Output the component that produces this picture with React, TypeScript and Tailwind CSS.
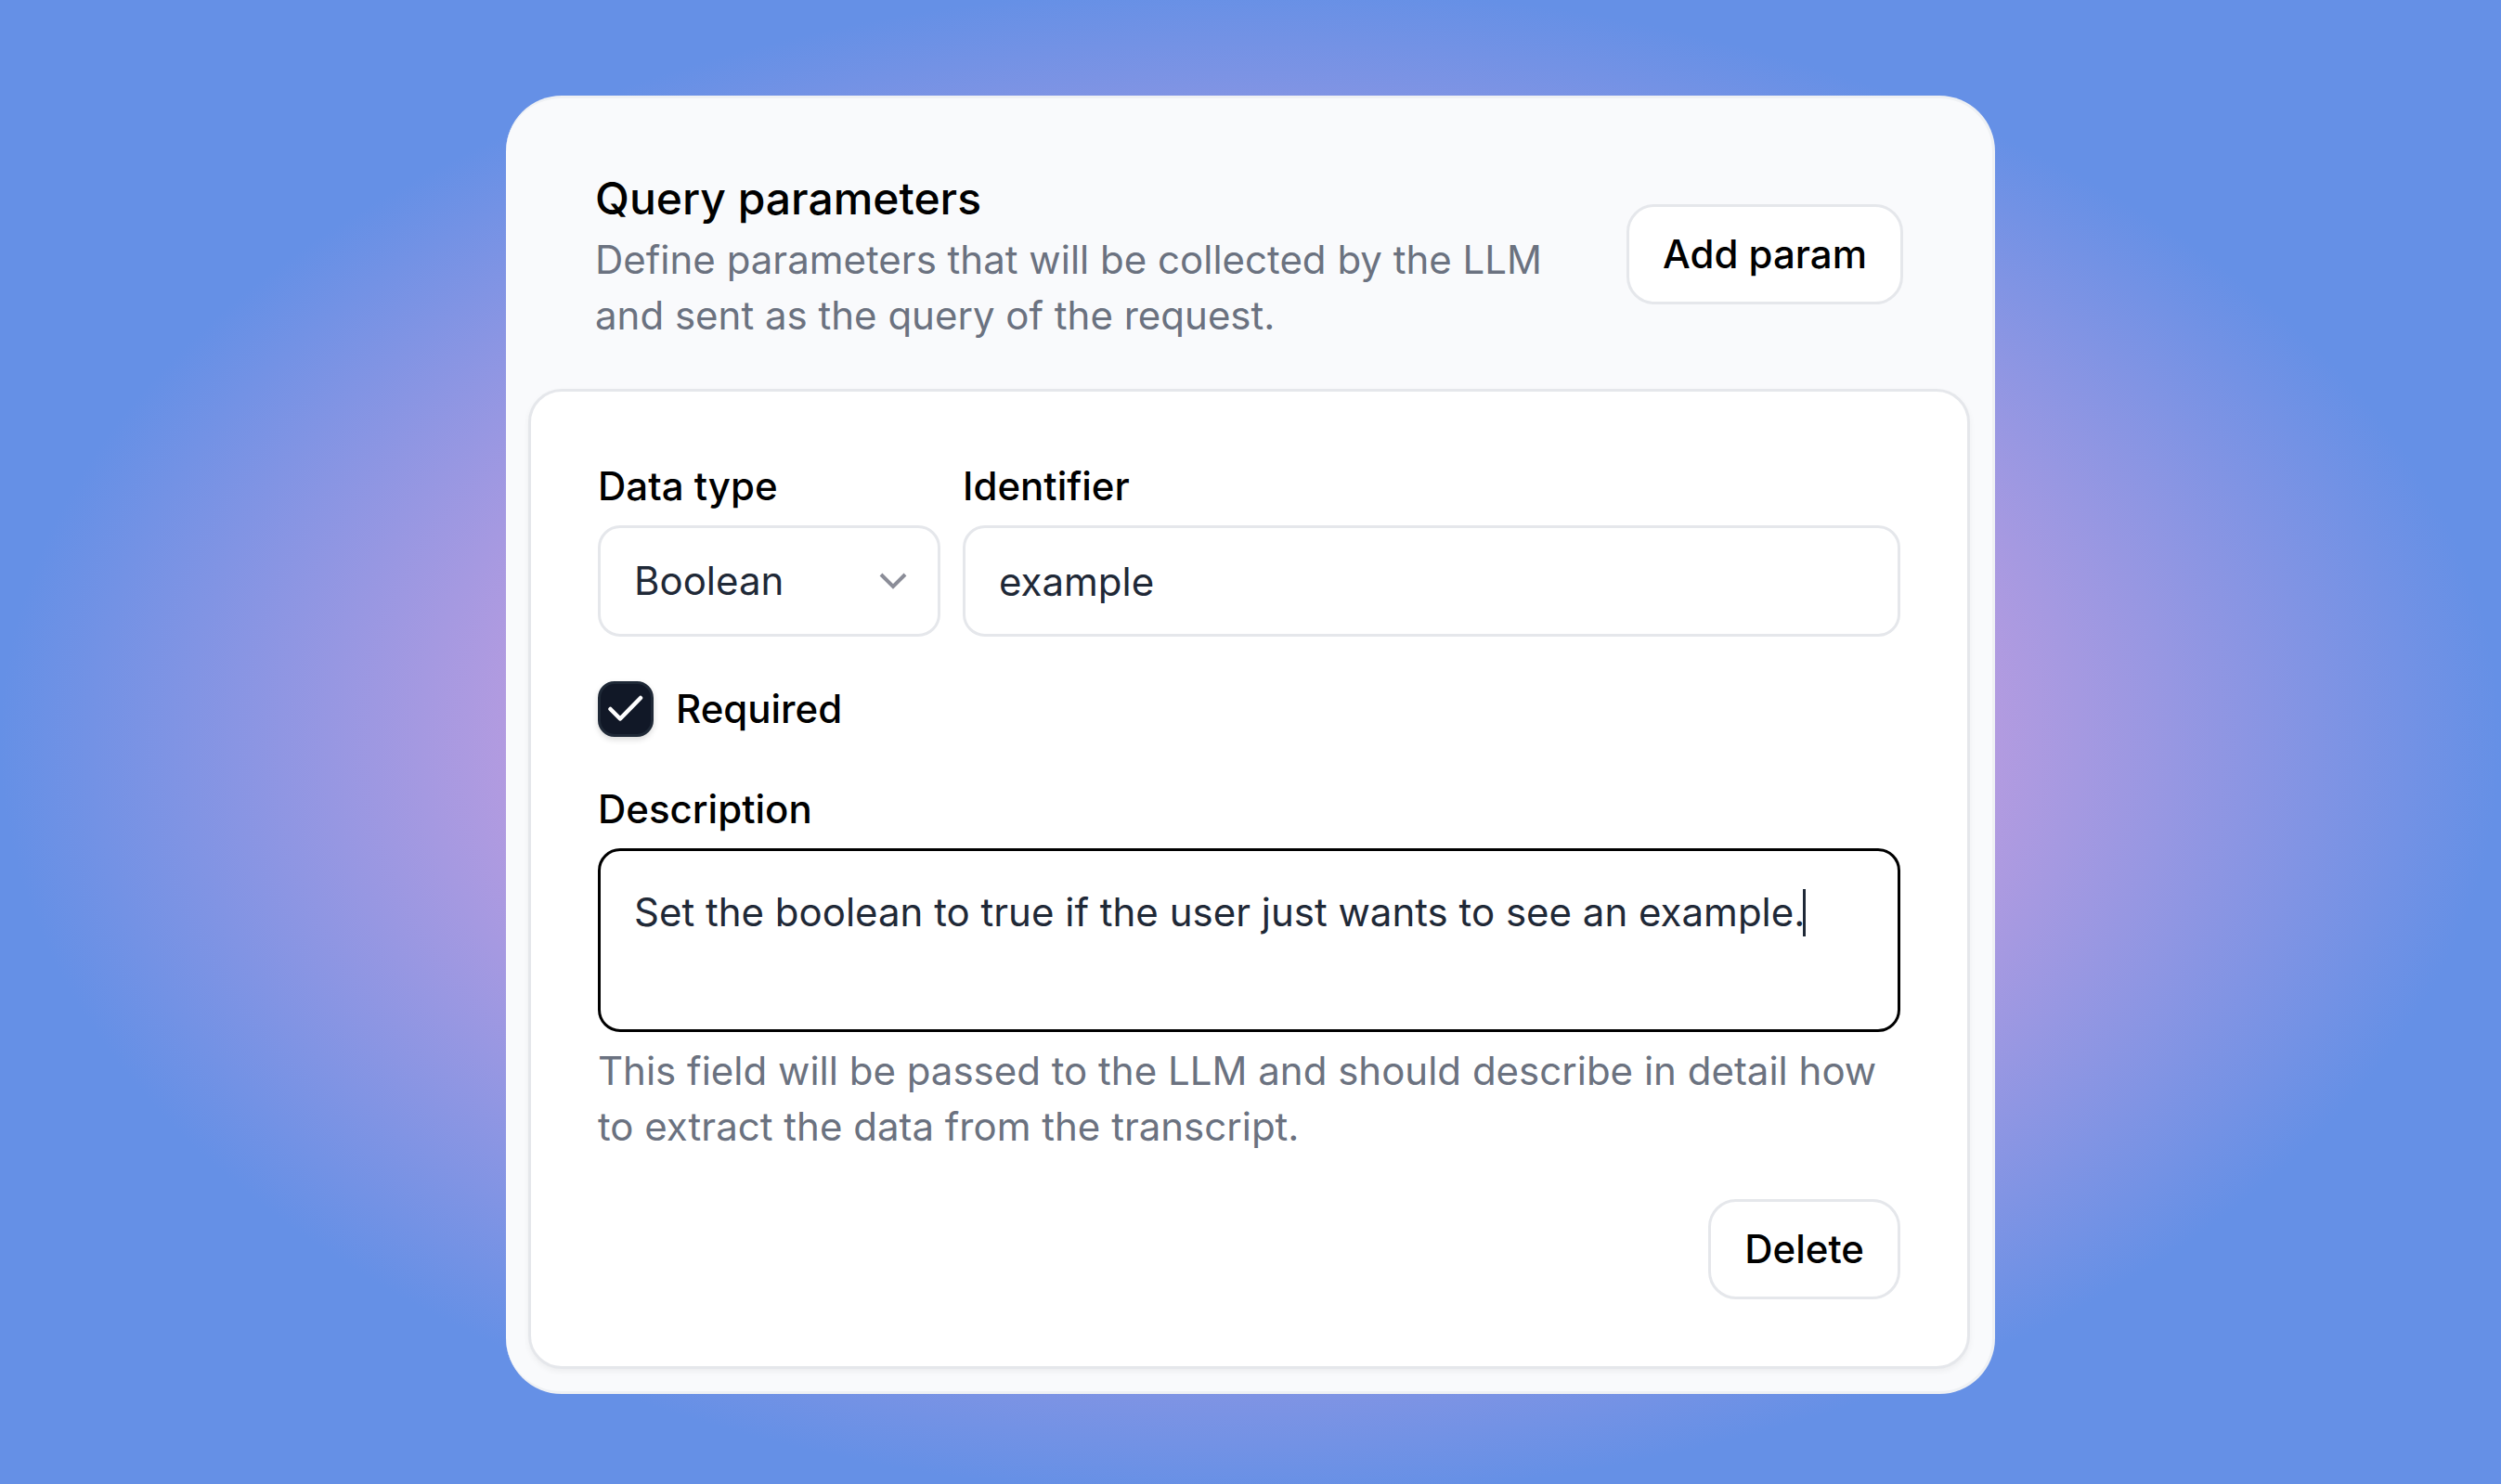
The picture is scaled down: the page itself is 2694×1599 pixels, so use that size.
import { useState } from "react";

const buttonClass =
  "h-[108px] shrink-0 rounded-[30px] border-[3px] border-[#e5e7eb] bg-white px-9 text-[42px] leading-[60px] font-medium text-black";
const labelClass = "block text-[42px] leading-[60px] font-medium text-black";
const fieldClass =
  "block h-[120px] w-full appearance-none rounded-[24px] border-[3px] border-[#e5e7eb] bg-white px-9 text-[42px] leading-[60px] text-[#1f2937] outline-none";
const hintClass = "text-[42px] leading-[60px] text-[#6b7280]";

export default function App() {
  const [dataType, setDataType] = useState("boolean");
  const [identifier, setIdentifier] = useState("example");
  const [required, setRequired] = useState(true);
  const [description, setDescription] = useState(
    "Set the boolean to true if the user just wants to see an example.",
  );

  return (
    <main className="flex min-h-screen justify-center bg-[radial-gradient(ellipse_50%_51%_at_50%_50%,#b39be0_59%,#6590e6_100%)] px-6 pt-[103px] pb-24 font-['Inter',sans-serif]">
      <section className="w-full max-w-[1604px] self-start rounded-[60px] border-y-[3px] border-r-[3px] border-[#eff1f4] bg-[#f9fafc] px-6 pb-6">
        <header className="flex items-center justify-between gap-20 px-[72px] pt-[72px] pb-[49px]">
          <div>
            <h2 className="text-[48px] leading-[72px] font-medium text-black">Query parameters</h2>
            <p className={hintClass}>
              Define parameters that will be collected by the LLM and sent as the query of the request.
            </p>
          </div>
          <button type="button" className={buttonClass}>
            Add param
          </button>
        </header>

        <form
          className="flex flex-col gap-12 rounded-[36px] border-[3px] border-[#e5e7eb] bg-white px-[72px] py-[72px] shadow-[0_3px_6px_rgba(0,0,0,0.05)]"
          onSubmit={(e) => e.preventDefault()}
        >
          <div className="flex gap-6">
            <div className="flex w-[369px] shrink-0 flex-col gap-3">
              <label htmlFor="data-type" className={labelClass}>
                Data type
              </label>
              <div className="relative">
                <select
                  id="data-type"
                  value={dataType}
                  onChange={(e) => setDataType(e.target.value)}
                  className={fieldClass}
                >
                  <option value="boolean">Boolean</option>
                  <option value="string">String</option>
                  <option value="number">Number</option>
                </select>
                <svg
                  viewBox="0 0 30 20"
                  className="pointer-events-none absolute top-[50px] right-9 h-5 w-[30px]"
                  fill="none"
                  stroke="#8b8d98"
                  strokeWidth="4"
                  aria-hidden="true"
                >
                  <path d="M2 3 L15 16 L28 3" />
                </svg>
              </div>
            </div>
            <div className="flex grow flex-col gap-3">
              <label htmlFor="identifier" className={labelClass}>
                Identifier
              </label>
              <input
                id="identifier"
                type="text"
                value={identifier}
                onChange={(e) => setIdentifier(e.target.value)}
                className={fieldClass}
              />
            </div>
          </div>

          <div className="flex items-center gap-6">
            <div className="relative size-[60px]">
              <input
                id="required"
                type="checkbox"
                checked={required}
                onChange={(e) => setRequired(e.target.checked)}
                className="block size-full appearance-none rounded-[18px] border-[3px] border-[#1f2937] bg-white shadow-[0_3px_6px_rgba(0,0,0,0.15)] checked:bg-[#111827]"
              />
              {required && (
                <svg
                  viewBox="0 0 60 60"
                  className="pointer-events-none absolute inset-0"
                  fill="none"
                  stroke="white"
                  strokeWidth="4.5"
                  strokeLinecap="round"
                  strokeLinejoin="round"
                  aria-hidden="true"
                >
                  <path d="M13.5 30 L24 40.5 L46 18" />
                </svg>
              )}
            </div>
            <label htmlFor="required" className={labelClass}>
              Required
            </label>
          </div>

          <div className="flex flex-col gap-3">
            <label htmlFor="description" className={labelClass}>
              Description
            </label>
            <div className="relative">
              <textarea
                id="description"
                value={description}
                onChange={(e) => setDescription(e.target.value)}
                className="block h-[198px] w-full resize-none rounded-[24px] border-[3px] border-black bg-white px-9 py-9 text-[42px] leading-[60px] text-[#1f2937] outline-none"
              />
              <span className="absolute top-11 left-[1298px] h-[51px] w-[3px] bg-[#1f2937]" aria-hidden="true" />
            </div>
            <p className={hintClass}>
              This field will be passed to the LLM and should describe in detail how to extract the data from the
              transcript.
            </p>
          </div>

          <button type="button" className={`self-end ${buttonClass}`}>
            Delete
          </button>
        </form>
      </section>
    </main>
  );
}
